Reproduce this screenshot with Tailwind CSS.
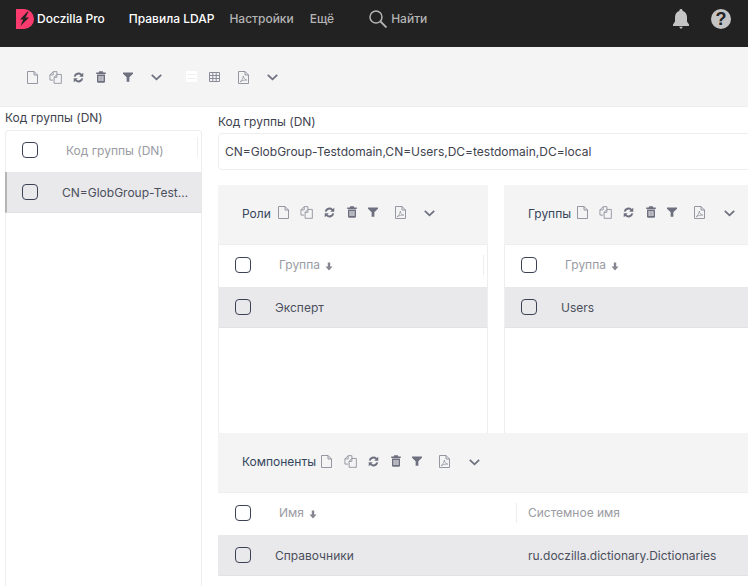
<!DOCTYPE html>
<html lang="ru">
<head>
<meta charset="utf-8">
<script src="https://cdn.jsdelivr.net/npm/@tailwindcss/browser@4"></script>
</head>
<body class="m-0">
<svg width="0" height="0" class="absolute">
  <defs>
    <symbol id="doc" viewBox="0 0 11 13"><path d="M.5.5h6.500L10.500 4v8.500H.5zM7 .5V4h3.500" fill="none" stroke="currentColor" stroke-width=".9"/></symbol>
    <symbol id="copy" viewBox="0 0 14 14"><path d="M4.500.7h4v3M4.500.7 1 4.200v5.600h3.500M4.500.7v3.500H1" fill="none" stroke="currentColor" stroke-width=".9"/><path d="M8.500 3.700h4.800v9.600H5.500V6.800zM8.500 3.700v3.100H5.500" fill="none" stroke="currentColor" stroke-width=".9"/></symbol>
    <symbol id="sync" viewBox="0 0 12 12"><path d="M.8 4.800A5.200 5.200 0 0 1 9.600 2.200L11.200.8v4.500H6.700l1.600-1.600A3.300 3.300 0 0 0 2.800 5.200zM11.200 7.200A5.200 5.200 0 0 1 2.400 9.800L.8 11.200V6.700h4.500L3.700 8.300A3.300 3.300 0 0 0 9.200 6.800z" fill="currentColor"/></symbol>
    <symbol id="trash" viewBox="0 0 10 12"><path d="M3.200.3h3.600l.6 1.300h2.400v1.300H.2V1.600h2.400zM1 3.500h8v7.400l-.8.9H1.800l-.8-.9zM2.600 5v5h1V5zm1.900 0v5h1V5zm1.900 0v5h1V5z" fill="currentColor" fill-rule="evenodd"/></symbol>
    <symbol id="filter" viewBox="0 0 11 11"><path d="M0 .5h11v1.300L7 5.800v4.900H4V5.800L0 1.800z" fill="currentColor"/></symbol>
    <symbol id="chev" viewBox="0 0 11 7"><path d="M.8.900 5.500 5.300 10.200.9" fill="none" stroke="currentColor" stroke-width="1.800"/></symbol>
    <symbol id="pdf" viewBox="0 0 11 13"><path d="M.5.500h6.500L10.500 4v8.500H.5zM7 .5V4h3.500" fill="none" stroke="currentColor" stroke-width=".9"/><path d="M2 10.800C3.600 10 5.200 7.300 5.300 5c.3 2.300 1.400 3.500 3.500 4.100-2.300-.2-4.500.4-6.800 1.700z" fill="none" stroke="currentColor" stroke-width=".7"/></symbol>
    <symbol id="down" viewBox="0 0 8 9"><path d="M2.800 .5h2.400v4h2.300L4 8.500.5 4.500h2.300z" fill="currentColor"/></symbol>
  </defs>
</svg>

<div class="w-[748px] h-[586px] overflow-hidden bg-white flex flex-col font-['Inter',sans-serif] text-[12px] text-[#4b4f5c]">
  <header class="h-[47px] shrink-0 bg-[#222222] flex items-start">
    <svg class="w-[18px] h-[20px] ml-[16px] mt-[9px] shrink-0" viewBox="0 0 18 20"><path d="M0 0h8a10 10 0 0 1 10 10 10 10 0 0 1-10 10H0z" fill="#fb3a6e"/><path d="M11.500 2.500 4 10.500h3.200L4.500 17 13 8.500H9.500l3-6z" fill="#222222"/></svg>
    <span class="ml-[3px] mt-[11px] text-white font-medium leading-[16px]">Doczilla Pro</span>
    <span class="ml-[24px] mt-[11px] text-white font-medium leading-[16px]">Правила LDAP</span>
    <span class="ml-[15px] mt-[11px] text-[#b4b4b4] font-medium leading-[16px]">Настройки</span>
    <span class="ml-[16px] mt-[11px] text-[#b4b4b4] font-medium leading-[16px]">Ещё</span>
    <svg class="w-[18px] h-[18px] ml-[35px] mt-[10px] text-[#b4b4b4]" viewBox="0 0 18 18"><circle cx="7" cy="7" r="6" fill="none" stroke="currentColor" stroke-width="1.500"/><path d="M11.500 11.500l6 6" stroke="currentColor" stroke-width="1.800"/></svg>
    <span class="ml-[4px] mt-[11px] text-[#b4b4b4] font-medium leading-[16px]">Найти</span>
    <div class="ml-auto mr-[17px] mt-[9px] flex items-center gap-[22px] text-[#c4c4c4]">
      <svg class="w-[16px] h-[20px]" viewBox="0 0 16 20"><path d="M8 0a1.500 1.500 0 0 1 1.500 1.700C12.200 2.500 14 5 14 8v4.500l2 3v1.500H0v-1.500l2-3V8c0-3 1.800-5.500 4.500-6.300A1.500 1.500 0 0 1 8 0zM6 17.800h4L8 20z" fill="currentColor"/></svg>
      <svg class="w-[20px] h-[20px]" viewBox="0 0 20 20"><circle cx="10" cy="10" r="10" fill="currentColor"/><text x="10" y="16" text-anchor="middle" font-family="Liberation Sans" font-weight="700" font-size="18" fill="#222222">?</text></svg>
    </div>
  </header>

  <div class="h-[60px] shrink-0 bg-[#f4f4f4] border-b border-[#eeeeee] flex items-start text-[#8a8c99]">
    <svg class="w-[11px] h-[13px] ml-[27px] mt-[24px]"><use href="#doc"/></svg>
    <svg class="w-[13px] h-[13px] ml-[11px] mt-[24px]"><use href="#copy"/></svg>
    <svg class="w-[11px] h-[11px] ml-[11px] mt-[25px] text-[#6e7080]"><use href="#sync"/></svg>
    <svg class="w-[10px] h-[12px] ml-[12px] mt-[24px] text-[#6e7080]"><use href="#trash"/></svg>
    <svg class="w-[10px] h-[10px] ml-[17px] mt-[25px] text-[#6e7080]"><use href="#filter"/></svg>
    <svg class="w-[11px] h-[7px] ml-[18px] mt-[27px] text-[#6e7080]"><use href="#chev"/></svg>
    <svg class="w-[11px] h-[11px] ml-[24px] mt-[24px]" viewBox="0 0 11 11"><rect width="11" height="11" rx="1" fill="#ffffff"/><path d="M1.500 3.500h8M1.500 7.500h8" stroke="#eeeeee"/></svg>
    <svg class="w-[11px] h-[10px] ml-[12px] mt-[25px] text-[#8a8c99]" viewBox="0 0 11 10"><path d="M.5.5h10v9H.5zM.5 3.500h10M.5 6.500h10M3.800.5v9M7.200.5v9" fill="none" stroke="currentColor"/></svg>
    <svg class="w-[11px] h-[13px] ml-[18px] mt-[24px]"><use href="#pdf"/></svg>
    <svg class="w-[11px] h-[7px] ml-[18px] mt-[27px] text-[#6e7080]"><use href="#chev"/></svg>
  </div>

  <div class="flex-1 flex min-h-0">
    <aside class="w-[197px] ml-[5px] shrink-0 flex flex-col">
      <div class="h-[23px] leading-[22px] text-[#3f4350]">Код группы (DN)</div>
      <div class="flex-1 border border-[#eeeeee] border-b-0 rounded-t-[4px]">
        <div class="h-[41px] pb-[3px] flex items-center relative">
          <span class="w-[16px] h-[16px] ml-[16px] border border-[#3d4154] rounded-[4px] shrink-0"></span>
          <span class="ml-[28px] pt-px text-[#9a9ba3]">Код группы (DN)</span>
          <span class="absolute right-[3px] top-[6px] h-[20px] border-r border-[#eeeeee]"></span>
        </div>
        <div class="h-[41px] -mx-px bg-[#e9e9eb] border-l-2 border-[#b5b5b5] border-b border-b-[#e2e2e4] flex items-center">
          <span class="w-[16px] h-[16px] ml-[15px] border border-[#3d4154] rounded-[4px] shrink-0"></span>
          <span class="ml-[24px] pt-px truncate w-[128px]">CN=GlobGroup-Testdomain,CN=Users</span>
        </div>
      </div>
    </aside>

    <main class="ml-[16px] flex-1 min-w-0 flex flex-col overflow-hidden">
      <div class="h-[26px] shrink-0 pt-[6px] leading-[17px] text-[#3f4350]">Код группы (DN)</div>
      <div class="h-[37px] w-[540px] shrink-0 border border-[#eeeeee] rounded-[4px] flex items-center pl-[6px] text-[#3f4350]">CN=GlobGroup-Testdomain,CN=Users,DC=testdomain,DC=local</div>

      <div class="mt-[15px] flex gap-[16px] h-[248px] shrink-0">
        <section class="w-[270px] shrink-0 flex flex-col border-r border-l border-[#eeeeee]">
          <div class="h-[60px] -mx-px shrink-0 bg-[#f4f4f4] border-b border-[#eeeeee] flex items-start text-[#8a8c99]">
            <span class="ml-[24px] mt-[20px] leading-[17px] text-[#34465c]">Роли</span>
            <svg class="w-[11px] h-[13px] ml-[7px] mt-[21px]"><use href="#doc"/></svg>
            <svg class="w-[13px] h-[13px] ml-[11px] mt-[21px]"><use href="#copy"/></svg>
            <svg class="w-[11px] h-[11px] ml-[11px] mt-[22px] text-[#6e7080]"><use href="#sync"/></svg>
            <svg class="w-[10px] h-[12px] ml-[12px] mt-[21px] text-[#6e7080]"><use href="#trash"/></svg>
            <svg class="w-[10px] h-[10px] ml-[11px] mt-[22px] text-[#6e7080]"><use href="#filter"/></svg>
            <svg class="w-[11px] h-[13px] ml-[17px] mt-[21px]"><use href="#pdf"/></svg>
            <svg class="w-[11px] h-[7px] ml-[18px] mt-[25px] text-[#6e7080]"><use href="#chev"/></svg>
          </div>
          <div class="h-[42px] pb-[2px] shrink-0 flex items-center relative">
            <span class="w-[16px] h-[16px] ml-[16px] border border-[#3d4154] rounded-[4px] shrink-0"></span>
            <span class="ml-[28px] text-[#9a9ba3]">Группа</span>
            <svg class="w-[8px] h-[9px] ml-[5px] mt-[2px] text-[#85868f]"><use href="#down"/></svg>
            <span class="absolute right-[3px] top-[10px] h-[20px] border-r border-[#eeeeee]"></span>
          </div>
          <div class="h-[41px] shrink-0 bg-[#e9e9eb] border-b border-[#e2e2e4] flex items-center">
            <span class="w-[16px] h-[16px] ml-[16px] border border-[#3d4154] rounded-[4px] shrink-0"></span>
            <span class="ml-[24px] pt-px">Эксперт</span>
          </div>
        </section>
        <section class="w-[270px] shrink-0 flex flex-col border-l border-[#eeeeee]">
          <div class="h-[60px] -ml-px shrink-0 bg-[#f4f4f4] border-b border-[#eeeeee] flex items-start text-[#8a8c99]">
            <span class="ml-[24px] mt-[20px] leading-[17px] text-[#34465c]">Группы</span>
            <svg class="w-[11px] h-[13px] ml-[6px] mt-[21px]"><use href="#doc"/></svg>
            <svg class="w-[13px] h-[13px] ml-[11px] mt-[21px]"><use href="#copy"/></svg>
            <svg class="w-[11px] h-[11px] ml-[11px] mt-[22px] text-[#6e7080]"><use href="#sync"/></svg>
            <svg class="w-[10px] h-[12px] ml-[12px] mt-[21px] text-[#6e7080]"><use href="#trash"/></svg>
            <svg class="w-[10px] h-[10px] ml-[11px] mt-[22px] text-[#6e7080]"><use href="#filter"/></svg>
            <svg class="w-[11px] h-[13px] ml-[17px] mt-[21px]"><use href="#pdf"/></svg>
            <svg class="w-[11px] h-[7px] ml-[19px] mt-[25px] text-[#6e7080]"><use href="#chev"/></svg>
          </div>
          <div class="h-[42px] pb-[2px] shrink-0 flex items-center">
            <span class="w-[16px] h-[16px] ml-[16px] border border-[#3d4154] rounded-[4px] shrink-0"></span>
            <span class="ml-[28px] text-[#9a9ba3]">Группа</span>
            <svg class="w-[8px] h-[9px] ml-[5px] mt-[2px] text-[#85868f]"><use href="#down"/></svg>
          </div>
          <div class="h-[41px] shrink-0 bg-[#e9e9eb] border-b border-[#e2e2e4] flex items-center">
            <span class="w-[16px] h-[16px] ml-[16px] border border-[#3d4154] rounded-[4px] shrink-0"></span>
            <span class="ml-[24px] pt-px">Users</span>
          </div>
        </section>
      </div>

      <section class="flex flex-col shrink-0">
        <div class="h-[60px] shrink-0 bg-[#f4f4f4] border-b border-[#eeeeee] flex items-start text-[#8a8c99]">
          <span class="ml-[24px] mt-[20px] leading-[17px] text-[#34465c]">Компоненты</span>
          <svg class="w-[11px] h-[13px] ml-[5px] mt-[22px]"><use href="#doc"/></svg>
          <svg class="w-[13px] h-[13px] ml-[12px] mt-[22px]"><use href="#copy"/></svg>
          <svg class="w-[11px] h-[11px] ml-[11px] mt-[23px] text-[#6e7080]"><use href="#sync"/></svg>
          <svg class="w-[10px] h-[12px] ml-[12px] mt-[22px] text-[#6e7080]"><use href="#trash"/></svg>
          <svg class="w-[10px] h-[10px] ml-[11px] mt-[23px] text-[#6e7080]"><use href="#filter"/></svg>
          <svg class="w-[11px] h-[13px] ml-[17px] mt-[22px]"><use href="#pdf"/></svg>
          <svg class="w-[11px] h-[7px] ml-[19px] mt-[26px] text-[#6e7080]"><use href="#chev"/></svg>
        </div>
        <div class="h-[42px] pb-[2px] shrink-0 flex items-center">
          <div class="w-[298px] flex items-center shrink-0">
            <span class="w-[16px] h-[16px] ml-[17px] border border-[#3d4154] rounded-[4px] shrink-0"></span>
            <span class="ml-[28px] text-[#9a9ba3]">Имя</span>
            <svg class="w-[8px] h-[9px] ml-[5px] mt-[2px] text-[#85868f]"><use href="#down"/></svg>
          </div>
          <span class="h-[20px] border-l border-[#eeeeee] pl-[11px] leading-[20px] text-[#9a9ba3]">Системное имя</span>
        </div>
        <div class="h-[41px] shrink-0 bg-[#e9e9eb] border-b border-[#e2e2e4] flex items-center">
          <div class="w-[310px] shrink-0 flex items-center">
            <span class="w-[16px] h-[16px] ml-[17px] border border-[#3d4154] rounded-[4px] shrink-0"></span>
            <span class="ml-[24px] pt-px">Справочники</span>
          </div>
          <span class="pt-px whitespace-nowrap">ru.doczilla.dictionary.Dictionaries</span>
        </div>
      </section>
    </main>
  </div>
</div>
</body>
</html>
